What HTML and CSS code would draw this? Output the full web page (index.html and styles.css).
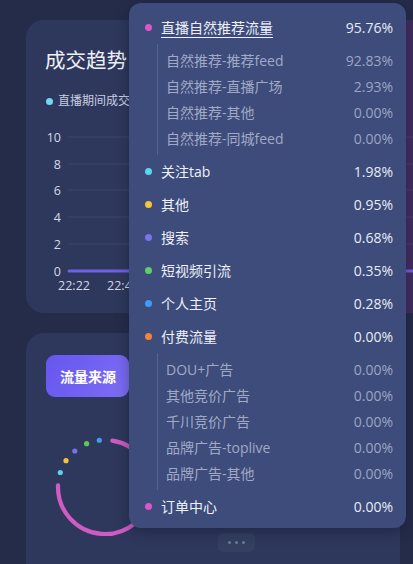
FILE: index.html
```html
<!DOCTYPE html>
<html lang="zh-CN">
<head>
<meta charset="utf-8">
<title>流量来源</title>
<link rel="stylesheet" href="styles.css">
</head>
<body>
<div class="page">
  <section class="card trend">
    <h2 class="title">成交趋势</h2>
    <div class="legend"><span class="ldot"></span><span class="ltext">直播期间成交金额</span></div>
    <svg class="chart" width="367" height="170" viewBox="0 0 367 170">
      <g class="grid">
        <line x1="22" y1="10" x2="367" y2="10"/>
        <line x1="22" y1="37" x2="367" y2="37"/>
        <line x1="22" y1="63" x2="367" y2="63"/>
        <line x1="22" y1="90" x2="367" y2="90"/>
        <line x1="22" y1="117" x2="367" y2="117"/>
      </g>
      <line class="zero" x1="23" y1="144" x2="367" y2="144"/>
      <g class="ylab">
        <text x="15" y="10">10</text>
        <text x="15" y="37">8</text>
        <text x="15" y="63">6</text>
        <text x="15" y="90">4</text>
        <text x="15" y="117">2</text>
        <text x="15" y="144">0</text>
      </g>
      <g class="xlab">
        <text x="28" y="158">22:22</text>
        <text x="77" y="158">22:42</text>
      </g>
    </svg>
  </section>

  <section class="card source">
    <button class="tab">流量来源</button>
    <div class="donut-row">
      <svg class="donut" width="100" height="100" viewBox="0 0 100 100">
        <path class="arc" d="M57.35 3.58 A47 47 0 1 1 3.03 48.36"/>
        <circle cx="5.3" cy="35.5" r="2.6" fill="#5ad2ec"/>
        <circle cx="11" cy="23.7" r="2.6" fill="#f2c23b"/>
        <circle cx="19.8" cy="14" r="2.6" fill="#7770e8"/>
        <circle cx="31.6" cy="6.7" r="2.6" fill="#5fc65d"/>
        <circle cx="44.3" cy="3.3" r="2.6" fill="#3d9df2"/>
      </svg>
      <div class="more"><span></span><span></span><span></span></div>
    </div>
  </section>

  <div class="tooltip">
    <div class="row main"><span class="dot pink"></span><span class="name hover">直播自然推荐流量</span><span class="val">95.76%</span></div>
    <div class="subs">
      <div class="row sub"><span class="name">自然推荐-推荐feed</span><span class="val">92.83%</span></div>
      <div class="row sub"><span class="name">自然推荐-直播广场</span><span class="val">2.93%</span></div>
      <div class="row sub"><span class="name">自然推荐-其他</span><span class="val">0.00%</span></div>
      <div class="row sub"><span class="name">自然推荐-同城feed</span><span class="val">0.00%</span></div>
    </div>
    <div class="row main"><span class="dot cyan"></span><span class="name">关注tab</span><span class="val">1.98%</span></div>
    <div class="row main"><span class="dot yellow"></span><span class="name">其他</span><span class="val">0.95%</span></div>
    <div class="row main"><span class="dot purple"></span><span class="name">搜索</span><span class="val">0.68%</span></div>
    <div class="row main"><span class="dot green"></span><span class="name">短视频引流</span><span class="val">0.35%</span></div>
    <div class="row main"><span class="dot blue"></span><span class="name">个人主页</span><span class="val">0.28%</span></div>
    <div class="row main"><span class="dot orange"></span><span class="name">付费流量</span><span class="val">0.00%</span></div>
    <div class="subs">
      <div class="row sub"><span class="name">DOU+广告</span><span class="val">0.00%</span></div>
      <div class="row sub"><span class="name">其他竞价广告</span><span class="val">0.00%</span></div>
      <div class="row sub"><span class="name">千川竞价广告</span><span class="val">0.00%</span></div>
      <div class="row sub"><span class="name">品牌广告-toplive</span><span class="val">0.00%</span></div>
      <div class="row sub"><span class="name">品牌广告-其他</span><span class="val">0.00%</span></div>
    </div>
    <div class="row main"><span class="dot pink"></span><span class="name">订单中心</span><span class="val">0.00%</span></div>
  </div>
</div>
</body>
</html>
```

FILE: styles.css
```css
* { box-sizing: border-box; }

html, body {
  margin: 0;
  padding: 0;
}

body {
  width: 413px;
  height: 564px;
  overflow: hidden;
  background: #252c4a;
  font-family: "Open Sans", "Noto Sans CJK SC", sans-serif;
  color: #e9ecf6;
}

.page {
  position: relative;
  height: 564px;
  padding: 20px 13px 0 26px;
  display: flex;
  flex-direction: column;
  gap: 20px;
  overflow: hidden;
}

.card {
  flex: none;
  border-radius: 18px;
  background: #2e385c;
}

.trend {
  height: 293px;
  margin-right: -13px;
  padding: 26px 0 0 20px;
  border-radius: 18px 0 0 18px;
  background: linear-gradient(90deg, #2e385c 0%, #2e385c 90%, #4a2d62 97%, #3e2e5e 100%);
}

.title {
  margin: 0 0 0 -1px;
  font-size: 20.5px;
  line-height: 28px;
  font-weight: 400;
  color: #eef0f8;
  white-space: nowrap;
}

.legend {
  margin-top: 19px;
  display: flex;
  align-items: center;
  font-size: 12px;
  line-height: 16px;
  color: #c9cee2;
  white-space: nowrap;
}

.ldot {
  width: 7px;
  height: 7px;
  border-radius: 50%;
  background: #73d6f2;
  margin-right: 5px;
  flex: none;
}

.chart {
  display: block;
  margin-top: 18px;
  overflow: visible;
}

.chart .grid line {
  stroke: rgba(255, 255, 255, 0.07);
  stroke-width: 1;
}

.chart .zero {
  stroke: #6d61e6;
  stroke-width: 3;
  stroke-linecap: round;
}

.chart text {
  font-family: "Open Sans", sans-serif;
  font-size: 12.5px;
  fill: #d4d8e7;
  dominant-baseline: central;
}

.chart .ylab text { text-anchor: end; }
.chart .xlab text { text-anchor: middle; }

.source {
  height: 231px;
  padding: 22px 20px 0 20px;
  border-radius: 18px 18px 0 0;
}

.tab {
  display: block;
  height: 42px;
  padding: 0 13px 0 14px;
  border: none;
  border-radius: 9px;
  background: linear-gradient(120deg, #6656ee 0%, #7464f2 60%, #7e6ef4 100%);
  color: #ffffff;
  font-family: "Noto Sans CJK SC", sans-serif;
  font-size: 14px;
  font-weight: 700;
  letter-spacing: 0;
}

.donut-row {
  margin-top: 40px;
  height: 115px;
  display: flex;
  align-items: flex-start;
}

.donut {
  display: block;
  margin-left: 9px;
  flex: none;
}

.donut .arc {
  fill: none;
  stroke: #cf5bc3;
  stroke-width: 4.2;
  stroke-linecap: round;
}

.more {
  align-self: flex-end;
  margin-left: 63px;
  width: 37px;
  height: 19px;
  border-radius: 5px;
  background: rgba(255, 255, 255, 0.035);
  display: flex;
  align-items: center;
  justify-content: center;
  gap: 4px;
}

.more span {
  width: 3px;
  height: 3px;
  border-radius: 50%;
  background: #6f7aa0;
}

/* tooltip overlay */
.tooltip {
  position: absolute;
  left: 129px;
  top: 3px;
  width: 277px;
  padding: 7.5px 13px 5.5px 16px;
  background: #3d4c7a;
  border-radius: 12px;
  box-shadow: 0 4px 14px rgba(8, 12, 30, 0.35);
}

.row {
  display: flex;
  align-items: center;
  white-space: nowrap;
  font-size: 14px;
}

.row.main {
  height: 33px;
  color: #eef0fa;
}

.row.sub {
  height: 26px;
  color: #a1a9c8;
}

.name { flex: 1; }

.name.hover {
  text-decoration: underline;
  text-underline-offset: 4px;
  text-decoration-thickness: 1px;
}

.val { text-align: right; }

.row.main .val { color: #e8ebf6; }
.row.sub .val { color: #9ca5c4; }

.dot {
  width: 7px;
  height: 7px;
  border-radius: 50%;
  margin-right: 9px;
  flex: none;
}

.dot.pink { background: #e055c9; }
.dot.cyan { background: #5ad6f0; }
.dot.yellow { background: #f4c63a; }
.dot.purple { background: #7a73ec; }
.dot.green { background: #5fcd68; }
.dot.blue { background: #3e9cf5; }
.dot.orange { background: #f5843a; }

.subs {
  margin-left: 12px;
  padding: 3.5px 0 3.5px 8px;
  border-left: 1px solid rgba(255, 255, 255, 0.13);
}
```
